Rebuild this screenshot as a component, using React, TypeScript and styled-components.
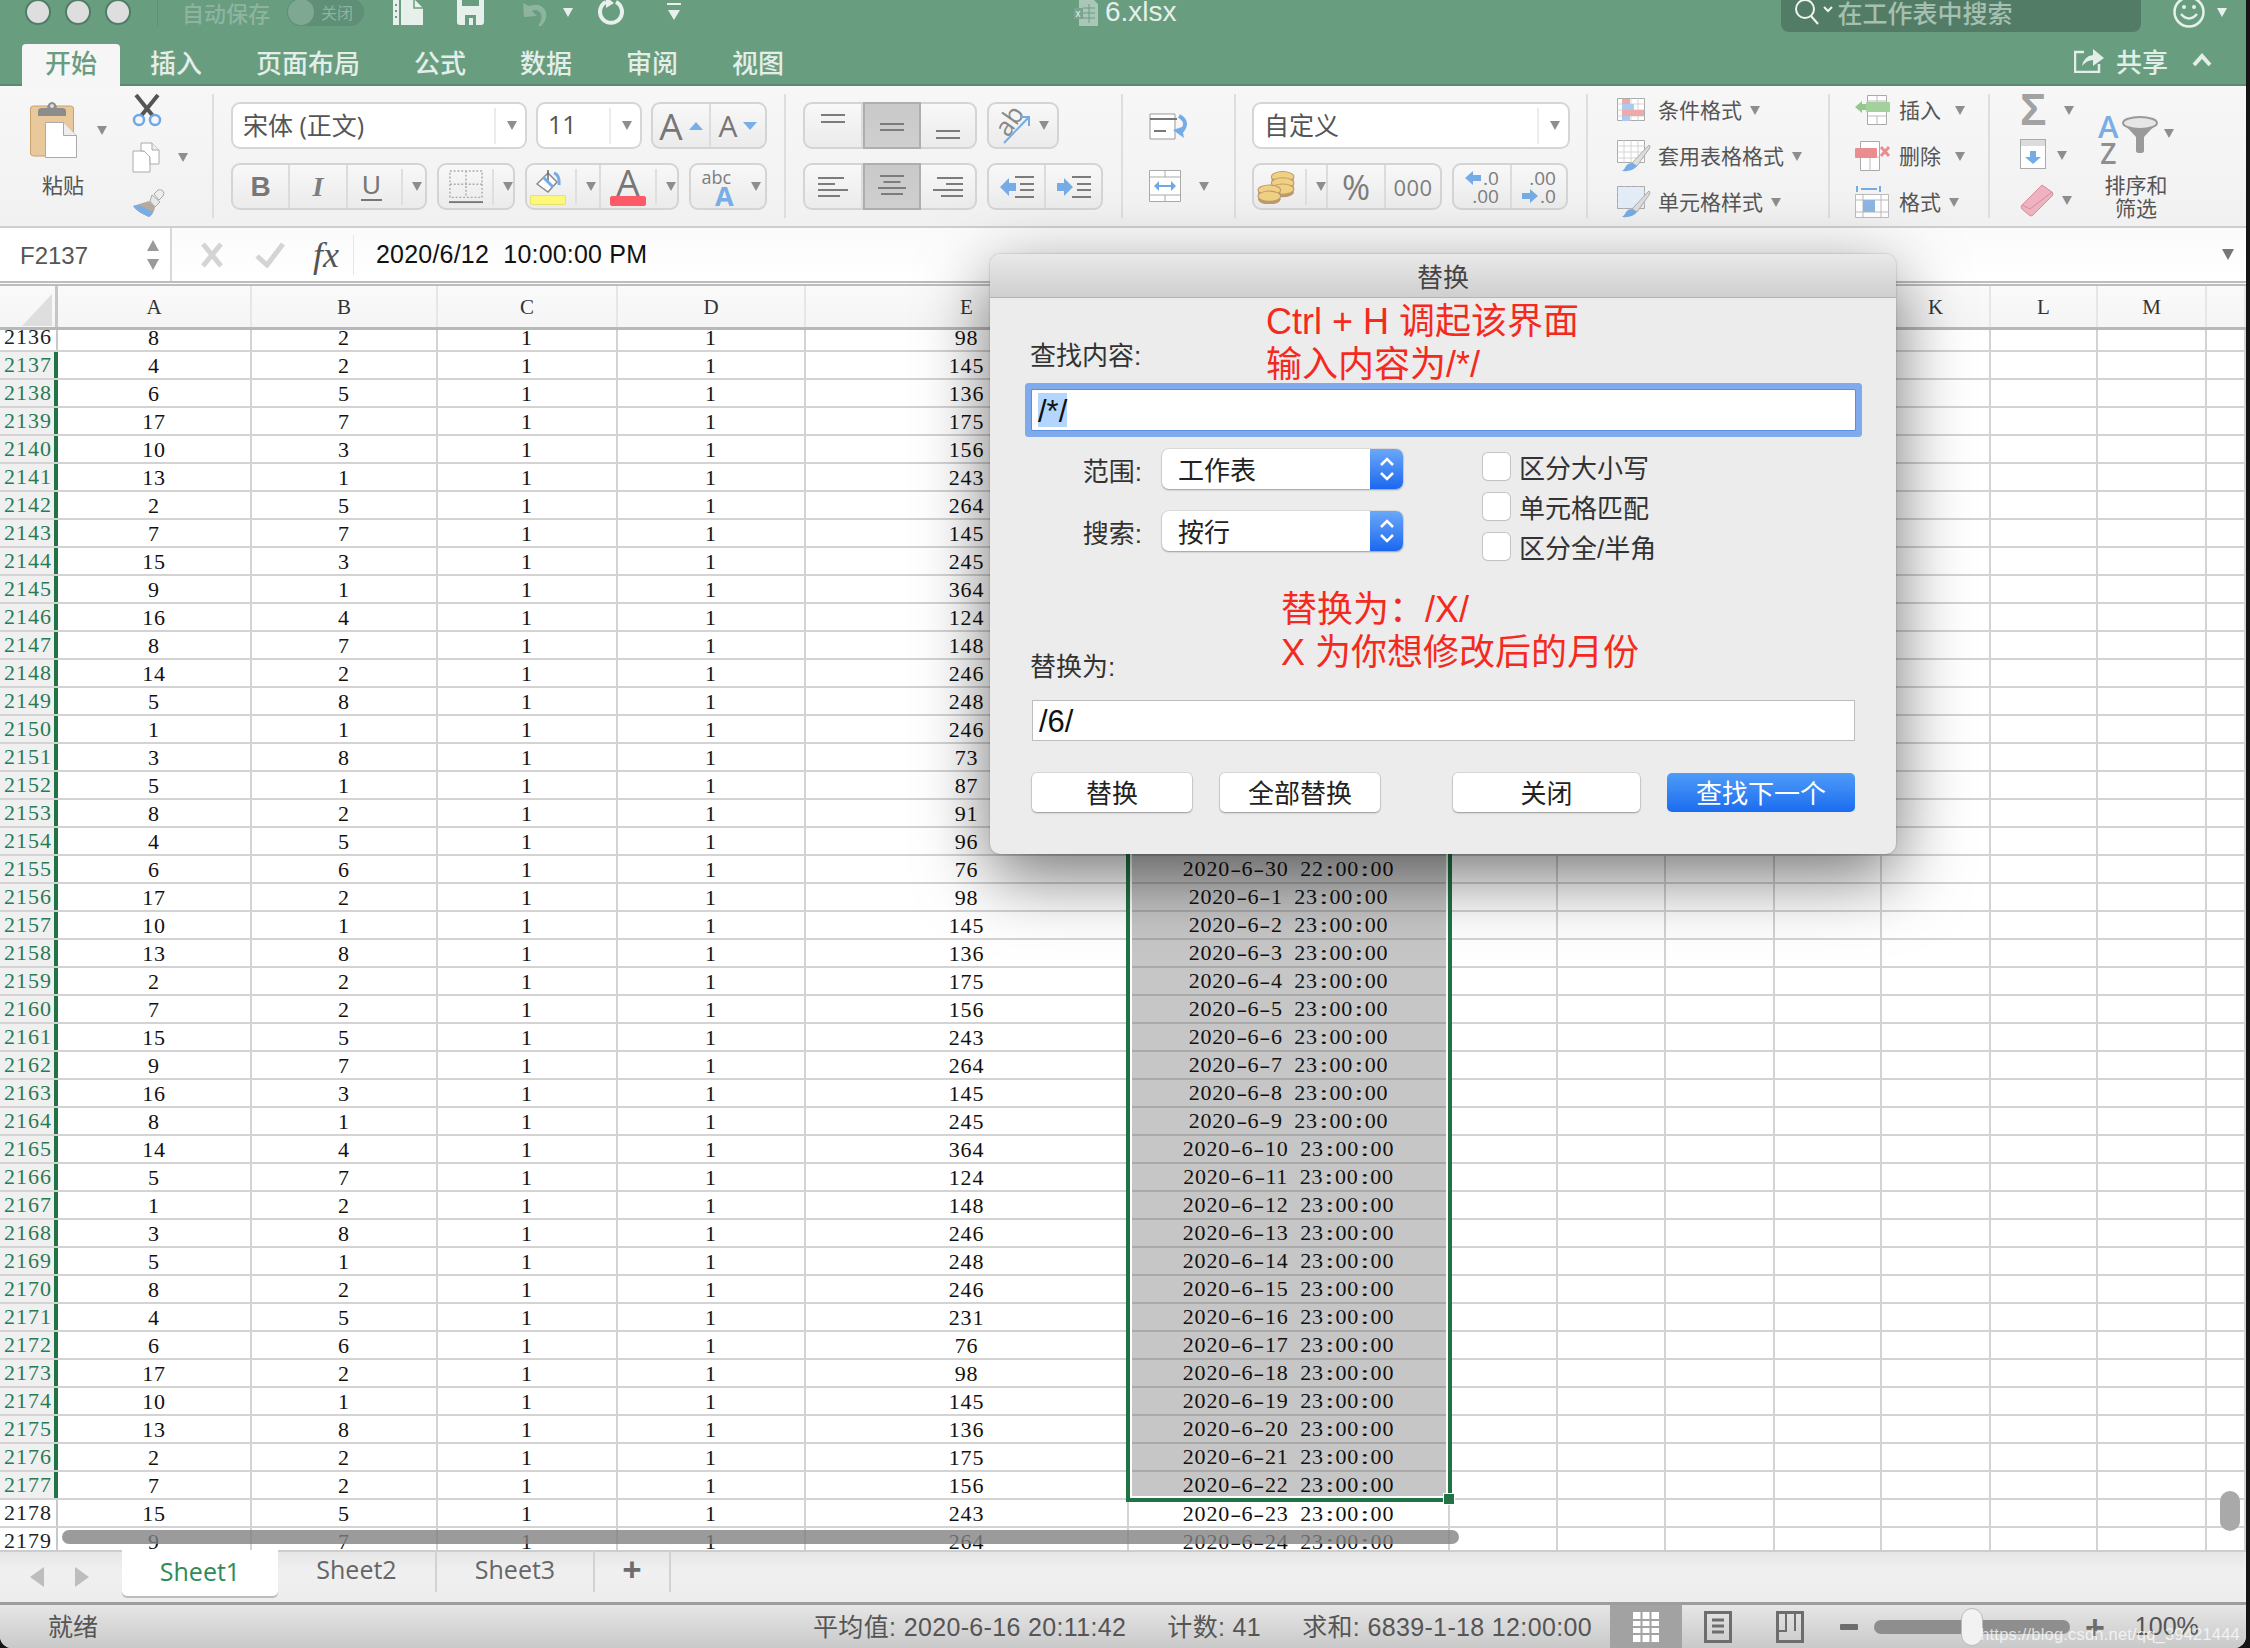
import React from 'react';
import styled, { createGlobalStyle } from 'styled-components';

const SANS = `"Liberation Sans", "Noto Sans CJK SC", sans-serif`;
const OPEN = `"Open Sans", "Noto Sans CJK SC", sans-serif`;
const SERIF = `"Liberation Serif", "Noto Sans CJK SC", serif`;

const Global = createGlobalStyle`
  html, body { margin: 0; padding: 0; width: 2250px; height: 1648px; overflow: hidden; background: #151515; }
  * { box-sizing: border-box; }
`;

const Window = styled.div`
  position: relative; width: 2246px; height: 1648px; overflow: hidden; background: #fff;
  border-radius: 0 0 12px 12px; font-family: ${SANS}; color: #333;
`;

/* ---------- title + tabs ---------- */
const Head = styled.header`height: 86px; background: #689d80; border-bottom: 2px solid #5a8b71;`;
const TopRow = styled.div`display: flex; align-items: center; height: 24px;`;
const Lights = styled.div`display: flex; gap: 14px; padding-left: 25px;`;
const Light = styled.span`width: 26px; height: 26px; border-radius: 50%; background: #dedede; border: 2px solid #4f7d65;`;
const TopSep = styled.span`width: 1px; height: 28px; background: #5e9077; margin-left: 26px;`;
const AutoSave = styled.span`margin-left: 24px; font-size: 22px; font-weight: 500; color: #8eb4a0;`;
const Toggle = styled.span`
  margin-left: 17px; width: 77px; height: 28px; border-radius: 14px; background: #5f8f76;
  display: flex; align-items: center; gap: 7px; color: #8eb4a0; font-size: 16px;
  &::before { content: ''; width: 26px; height: 26px; margin-left: 1px; border-radius: 50%; background: #7fa892; }
`;
const TopIcon = styled.span<{ $ml: number }>`display: flex; margin-left: ${p => p.$ml}px;`;
const TitleText = styled.span`margin-left: 7px; font-size: 28px; color: #e6efe9;`;
const Search = styled.div`
  margin-left: 604px; width: 360px; height: 40px; border-radius: 8px; background: #527c66; flex: none;
  display: flex; align-items: center; padding-left: 12px; color: #a5c0b1; font-size: 25px; font-weight: 500;
`;
const SearchText = styled.span`margin-left: 5px;`;
const TabRow = styled.nav`display: flex; align-items: flex-end; height: 44px; margin-top: 18px; padding-left: 22px; gap: 6px;`;
const Tab = styled.div<{ $active?: boolean }>`
  height: 44px; padding: 0 24px 9px; display: flex; align-items: center; justify-content: center; font-size: 26px; font-weight: 500; white-space: nowrap;
  color: ${p => (p.$active ? '#6a9c81' : '#e4eee8')};
  background: ${p => (p.$active ? '#f6f6f6' : 'transparent')};
  border-radius: 4px 4px 0 0; margin-bottom: -2px;
  width: ${p => (p.$active ? '98px' : 'auto')};
`;
const Share = styled.div`
  margin-left: auto; display: flex; align-items: center; gap: 12px; padding: 0 34px 8px 0; height: 44px; color: #e4eee8;
  font-size: 26px; font-weight: 500;
`;

/* ---------- ribbon ---------- */
const Ribbon = styled.section`
  display: flex; height: 142px; background: linear-gradient(#f7f7f7, #f1f1f1); border-bottom: 2px solid #cfcfcf;
`;
const Group = styled.div<{ $w: number; $pl?: number }>`
  position: relative; flex: none; width: ${p => p.$w}px; padding-left: ${p => p.$pl ?? 0}px;
`;
const Split = styled.span`flex: none; width: 2px; height: 124px; margin-top: 8px; background: #dedede;`;
const Rows = styled.div`display: flex; flex-direction: column; gap: 14px; padding-top: 16px;`;
const Row = styled.div<{ $gap?: number }>`display: flex; gap: ${p => p.$gap ?? 10}px;`;
const Select = styled.div<{ $w: number }>`
  width: ${p => p.$w}px; height: 47px; background: #fff; border: 2px solid #d6d6d6; border-radius: 9px;
  display: flex; align-items: center; padding-left: 10px; font-size: 25px; color: #555; font-family: ${OPEN};
`;
const SelectText = styled.span`flex: 1; margin-top: -3px; white-space: nowrap;`;
const Ends = styled.span`
  width: 2px; height: 36px; background: #ececec; margin-right: 11px;
`;
const EndGap = styled.span`width: 8px; flex: none;`;
const BtnGroup = styled.div<{ $w: number }>`
  width: ${p => p.$w}px; height: 47px; display: flex;
  border: 2px solid #d4d4d4; border-radius: 9px; background: linear-gradient(#f8f8f8, #ebebeb);
`;
const Seg = styled.div<{ $w: number; $active?: boolean; $pl?: number }>`
  flex: none; width: ${p => p.$w}px; height: 100%; position: relative;
  display: flex; align-items: center; gap: 5px; color: #777;
  justify-content: ${p => (p.$pl !== undefined ? 'flex-start' : 'center')};
  padding-left: ${p => p.$pl ?? 0}px;
  border-right: 2px solid #dcdcdc;
  &:last-child { border-right: 0; flex: 1; }
  ${p => p.$active && `
    background: linear-gradient(#c9c9c9, #cfcfcf); border: 2px solid #aeaeae; border-bottom-color: #aeaeae;
    margin: -2px 0; height: 47px;
  `}
`;
const SegBar = styled.span`flex: none; width: 2px; height: 36px; background: #dfdfdf; margin: 0 4px;`;
const Caret = styled.span<{ $ml?: number; $c?: string; $mt?: number }>`
  flex: none; display: inline-block; width: 0; height: 0; margin-left: ${p => p.$ml ?? 0}px; margin-top: ${p => p.$mt ?? 0}px;
  border-left: 5px solid transparent; border-right: 5px solid transparent; border-top: 9px solid ${p => p.$c ?? '#8e8e8e'};
`;
const Bold = styled.span`font-family: ${SANS}; font-weight: 700; font-size: 28px; color: #777;`;
const Ital = styled.span`font-family: ${SERIF}; font-style: italic; font-weight: 700; font-size: 28px; color: #7d7d7d;`;
const Under = styled.span`font-family: ${SANS}; font-size: 26px; color: #777; line-height: 24px; border-bottom: 2px solid #777; padding: 0 1px 2px; margin-right: 10px;`;
const BigA = styled.span<{ $s: number }>`font-family: ${OPEN}; font-size: ${p => p.$s}px; line-height: 1; color: #777; margin-right: 1px;`;
const Tri = styled.span<{ $down?: boolean }>`
  width: 0; height: 0; border-left: 7px solid transparent; border-right: 7px solid transparent;
  ${p => (p.$down ? 'border-top: 8px solid #7aaee6;' : 'border-bottom: 8px solid #7aaee6;')}
`;
const ColorCell = styled.div`display: flex; flex-direction: column; align-items: center; line-height: 1;`;
const Swatch = styled.span<{ $c: string; $b: string }>`
  width: 36px; height: 10px; border-radius: 2px; background: ${p => p.$c}; border: 1px solid ${p => p.$b};
`;
const FontA = styled.span`font-family: ${OPEN}; font-size: 37px; line-height: 28px; color: #777;`;
const AbcWrap = styled.div`display: flex; flex-direction: column; align-items: center; line-height: 1; color: #7d7d7d; font-family: ${OPEN}; font-size: 18px;`;
const AbcA = styled.span`color: #79ade6; font-weight: 700; font-size: 27px; line-height: 20px; margin-left: 16px;`;
const Pct = styled.span`font-family: ${OPEN}; font-size: 34px; color: #7d7d7d;`;
const Thou = styled.span`font-family: ${OPEN}; font-size: 22px; color: #7d7d7d; letter-spacing: .5px;`;
const Dec = styled.div`display: grid; grid-template-columns: auto auto; align-items: center; justify-items: end; column-gap: 2px; font-family: ${OPEN}; font-size: 19px; line-height: 18px; color: #7d7d7d;`;
const DecWide = styled.span`grid-column: 1 / 3;`;
const Stack = styled.div<{ $pt: number; $gap: number; $pl?: number }>`
  display: flex; flex-direction: column; align-items: flex-start; gap: ${p => p.$gap}px; padding-top: ${p => p.$pt}px; padding-left: ${p => p.$pl ?? 0}px;
`;
const IconLine = styled.div`display: flex; align-items: center; height: 32px;`;
const PasteCol = styled.div`position: absolute; left: 30px; top: 14px; display: flex; flex-direction: column;`;
const PasteTop = styled.div`display: flex; align-items: center;`;
const PasteLabel = styled.span`font-size: 21px; color: #555; margin: 9px 0 0 12px;`;
const ClipCol = styled.div`position: absolute; left: 132px; top: 8px; display: flex; flex-direction: column; gap: 15px;`;
const StyleRow = styled.div`display: flex; align-items: center; height: 46px;`;
const StyleIcon = styled.span<{ $w: number }>`display: flex; width: ${p => p.$w}px; flex: none;`;
const StyleText = styled.span`font-size: 21px; color: #555; white-space: nowrap; margin-top: -2px;`;
const SortCol = styled.div`position: absolute; left: 108px; top: 26px; display: flex; flex-direction: column; align-items: center; width: 92px;`;
const SortTop = styled.div`display: flex; align-items: flex-start; width: 92px;`;
const FunnelWrap = styled.span`display: flex; margin: 4px 0 0 3px;`;
const AZ = styled.div`display: flex; flex-direction: column; align-items: center; font-family: ${OPEN}; font-size: 28px; line-height: 26px; font-weight: 600; color: #8f8f8f;`;
const AZA = styled.span`color: #79ade6; font-size: 31px; line-height: 28px;`;
const SortLabel = styled.div`font-size: 21px; color: #555; line-height: 23px; text-align: center; margin-top: 8px; margin-left: -16px; white-space: nowrap;`;
const SumGlyph = styled.span`font-family: ${SANS}; font-weight: 700; font-size: 44px; line-height: 32px; color: #a2a2a2; width: 44px;`;

/* ---------- formula bar ---------- */
const Formula = styled.div`display: flex; align-items: center; height: 58px; background: linear-gradient(#fbfbfb, #fff); border-bottom: 5px double #bdbdbd;`;
const NameBox = styled.div`
  width: 172px; height: 100%; background: #fff; border-right: 2px solid #d8d8d8; display: flex; align-items: center;
  padding-left: 20px; font-size: 24px; color: #555; font-family: ${SANS};
`;
const NameText = styled.span`flex: 1; margin-top: 2px;`;
const Spin = styled.div`display: flex; flex-direction: column; gap: 8px; margin-right: 11px;`;
const SpinUp = styled.span`width: 0; height: 0; border-left: 6px solid transparent; border-right: 6px solid transparent; border-bottom: 11px solid #9a9a9a;`;
const SpinDown = styled(SpinUp)`border-bottom: 0; border-top: 11px solid #9a9a9a;`;
const FxIcons = styled.div`display: flex; align-items: center; width: 188px; height: 100%; padding-left: 28px; gap: 31px;`;
const Fx = styled.span`font-family: ${SERIF}; font-style: italic; font-size: 36px; color: #555; border-right: 1px solid #e6e6e6; padding-right: 14px; line-height: 40px; margin-left: -3px;`;
const FormulaText = styled.span`flex: 1; font-size: 25px; color: #111; white-space: pre; margin-left: 16px; letter-spacing: .2px;`;
const FormulaDrop = styled(Caret)`margin-right: 12px; border-left-width: 6px; border-right-width: 6px; border-top-width: 11px; border-top-color: #777;`;

/* ---------- sheet ---------- */
const COLS = [
  ['A', 194], ['B', 186], ['C', 180], ['D', 188], ['E', 323], ['F', 321], ['G', 108], ['H', 108],
  ['I', 109], ['J', 107], ['K', 109], ['L', 107], ['M', 109], ['', 39],
] as const;

const ColHead = styled.div`display: flex; height: 44px; background: linear-gradient(#fafafa, #f5f5f5); border-bottom: 3px solid #b8b8b8;`;
const Corner = styled.div`
  position: relative; width: 58px; border-right: 3px solid #c6c6c6;
  &::after { content: ''; position: absolute; left: 22px; top: 8px; width: 30px; height: 32px; background: #dedede; clip-path: polygon(100% 0, 100% 100%, 0 100%); }
`;
const ColLabel = styled.div<{ $w: number }>`
  width: ${p => p.$w}px; flex: none; display: flex; align-items: center; justify-content: center; padding-top: 2px;
  border-right: 2px solid #e6e6e6; font-family: ${SERIF}; font-size: 21px; color: #333;
`;
const Sheet = styled.div`position: relative; height: 1220px; overflow: hidden; background: #fff;`;
const Scrolled = styled.div`margin-top: -6px;`;
const GridRow = styled.div`display: flex; height: 28px; border-bottom: 2px solid #d3d3d3;`;
const RowNo = styled.div<{ $sel: boolean }>`
  width: 58px; flex: none; padding-left: 4px; display: flex; align-items: center; font-family: ${SERIF}; font-size: 22px; letter-spacing: 1px;
  color: ${p => (p.$sel ? '#2b7a50' : '#222')};
  background: ${p => (p.$sel ? '#f0f0f0' : '#fff')};
  border-right: ${p => (p.$sel ? '4px solid #217346' : '2px solid #c8c8c8')};
`;
const Cell = styled.div<{ $w: number; $sel?: boolean }>`
  width: ${p => p.$w}px; flex: none; height: 28px; display: flex; align-items: center; justify-content: center;
  font-family: ${SERIF}; font-size: 22px; letter-spacing: .8px; color: #111; white-space: pre;
  border-right: 2px solid #d3d3d3;
  ${p => p.$sel && `background: #c6c6c6; border-bottom: 2px solid #a9a9a9; border-right-color: transparent;`}
`;
const Sep = styled.span`display: inline-block; width: 11.6px; text-align: center; white-space: pre; letter-spacing: 0; transform: scaleX(1.5);`;
const SelBox = styled.div`
  position: absolute; left: 1126px; top: 20px; width: 326px; height: 1152px; border: 4px solid #217346; pointer-events: none;
  box-shadow: inset 0 0 0 2px #fff;
`;
const Handle = styled.span`position: absolute; right: -7px; bottom: -7px; width: 12px; height: 12px; background: #217346; border: 1px solid #fff;`;
const HScroll = styled.div`position: absolute; left: 62px; top: 1200px; width: 1397px; height: 14px; border-radius: 7px; background: rgba(130,130,130,.8);`;
const VScroll = styled.div`position: absolute; left: 2220px; top: 1161px; width: 20px; height: 40px; border-radius: 10px; background: #a9a9a9;`;

/* ---------- bottom bars ---------- */
const SheetBar = styled.div`display: flex; height: 52px; background: linear-gradient(#e6e6e6, #f0f0f0 40%, #ededed); border-top: 2px solid #cdcdcd;`;
const SheetNav = styled.div`display: flex; gap: 31px; width: 122px; padding: 15px 0 0 30px;`;
const NavL = styled.span`width: 0; height: 0; border-top: 10px solid transparent; border-bottom: 10px solid transparent; border-right: 14px solid #bdbdbd;`;
const NavR = styled(NavL)`border-right: 0; border-left: 14px solid #bdbdbd;`;
const SheetTab = styled.div<{ $w: number; $active?: boolean }>`
  width: ${p => p.$w}px; height: ${p => (p.$active ? '46px' : '42px')}; margin-top: -2px; display: flex; align-items: center; justify-content: center;
  font-family: ${OPEN}; font-size: 25px; padding-bottom: 5px;
  color: ${p => (p.$active ? '#2e8b57' : '#666')};
  ${p => (p.$active
    ? 'background: #fff; border-radius: 0 0 5px 5px; box-shadow: 0 2px 0 #bdbdbd;'
    : 'border-right: 2px solid #d2d2d2;')}
`;
const Status = styled.div`
  position: relative; display: flex; align-items: center; height: 46px; padding-bottom: 4px; background: linear-gradient(#e6e6e6, #c9c9c9); border-top: 3px solid #9d9d9d;
  font-size: 25px; color: #555;
`;
const Ready = styled.span`margin-left: 48px; width: 50px;`;
const Stats = styled.div`display: flex; margin-left: 715px; gap: 41px; white-space: nowrap; letter-spacing: .35px;`;
const StatusRight = styled.div`position: absolute; left: 1610px; top: 0; right: 0; height: 100%; display: flex; align-items: center;`;
const ViewBtn = styled.div<{ $active?: boolean }>`
  width: 72px; height: 100%; display: flex; align-items: center; justify-content: center;
  background: ${p => (p.$active ? '#a2a2a2' : 'transparent')};
`;
const Minus = styled.span`width: 18px; height: 6px; background: #6d6d6d; margin-left: 14px; border-radius: 1px;`;
const Track = styled.div`
  position: relative; width: 196px; height: 14px; margin-left: 16px; background: #8e8e8e; border-radius: 7px;
`;
const Knob = styled.span`position: absolute; left: 87px; top: -12px; width: 22px; height: 38px; border-radius: 11px; background: #f2f2f2; border: 1px solid #bbb;`;
const Plus = styled.span<{ $ml?: number }>`font-size: 34px; font-weight: 700; color: #6d6d6d; margin-left: ${p => p.$ml ?? 0}px; line-height: 1;`;
const Zoom = styled.span`margin-left: 30px; color: #555;`;
const Watermark = styled.span`
  position: absolute; right: 6px; bottom: 4px; font-size: 16.5px; color: rgba(255,255,255,.72); white-space: nowrap; letter-spacing: .2px;
`;

/* ---------- dialog ---------- */
const Dialog = styled.div`
  position: absolute; left: 990px; top: 254px; width: 906px; height: 600px; border-radius: 10px; background: #ececec;
  box-shadow: 0 22px 70px rgba(0,0,0,.55), 0 0 2px rgba(0,0,0,.3); overflow: hidden; font-size: 26px; color: #333;
`;
const DlgTitle = styled.div`
  height: 44px; background: linear-gradient(#e9e9e9, #cfcfcf); border-bottom: 1px solid #b4b4b4;
  display: flex; align-items: center; justify-content: center; font-size: 26px; color: #444;
`;
const DlgBody = styled.div`padding: 0 41px 0 42px;`;
const FieldLabel = styled.div<{ $mt: number }>`line-height: 30px; margin-top: ${p => p.$mt}px; margin-left: -2px;`;
const FocusInput = styled.div`
  height: 40px; margin-top: 19px; background: #fff; box-shadow: 0 0 0 1px #5d8fdc, 0 0 0 7px #7fabec; border-radius: 1px;
  display: flex; align-items: center; padding-left: 6px; font-size: 31px; color: #111;
`;
const Sel = styled.span`background: #b4d5fe; line-height: 38px; height: 34px;`;
const PlainInput = styled.div`
  height: 41px; margin-top: 18px; background: #fff; border: 1px solid #bdbdbd;
  display: flex; align-items: center; padding: 2px 0 0 6px; font-size: 31px; color: #111;
`;
const Options = styled.div`display: flex; margin-top: 19px; height: 111px;`;
const OptLeft = styled.div`display: flex; flex-direction: column; gap: 22px;`;
const OptLine = styled.div`display: flex; align-items: center; height: 40px;`;
const OptLabel = styled.span`width: 111px; text-align: right; margin-left: -1px;`;
const PopUp = styled.div`
  width: 241px; height: 40px; margin-left: 20px; background: #fff; border-radius: 7px; position: relative; overflow: hidden;
  box-shadow: 0 1px 2px rgba(0,0,0,.3), 0 0 0 1px rgba(0,0,0,.06); display: flex; align-items: center; padding: 0 0 2px 16px; color: #222;
`;
const PopEnd = styled.span`
  position: absolute; right: 0; top: 0; bottom: 0; width: 33px; background: linear-gradient(#6ba8f8, #1b68f0);
  display: flex; align-items: center; justify-content: center;
`;
const OptRight = styled.div`display: flex; flex-direction: column; gap: 12px; margin: 3px 0 0 80px;`;
const CheckLine = styled.div`display: flex; align-items: center; height: 28px; gap: 9px;`;
const Box = styled.span`width: 27px; height: 27px; border-radius: 5px; background: #fff; box-shadow: 0 0 0 1px #c4c4c4, 0 1px 1px rgba(0,0,0,.15);`;
const Buttons = styled.div`display: flex; margin-top: 32px;`;
const Btn = styled.div<{ $w: number; $ml?: number; $primary?: boolean }>`
  width: ${p => p.$w}px; height: 39px; margin-left: ${p => p.$ml ?? 0}px; border-radius: 5px; display: flex; align-items: center; justify-content: center; padding-bottom: 2px;
  background: ${p => (p.$primary ? 'linear-gradient(#4f9cf8, #1b6cf0)' : '#fff')};
  color: ${p => (p.$primary ? '#fff' : '#222')};
  box-shadow: ${p => (p.$primary ? 'none' : '0 1px 2px rgba(0,0,0,.3), 0 0 0 1px rgba(0,0,0,.08)')};
`;
const Note = styled.div<{ $l: number; $t: number }>`
  position: absolute; left: ${p => p.$l}px; top: ${p => p.$t}px; font-size: 36px; line-height: 42.5px; color: #f52a1e; white-space: pre;
`;

/* ---------- icons ---------- */
const Paste = () => (
  <svg width="48" height="60" viewBox="0 0 48 60">
    <rect x=".5" y="6" width="43" height="50" rx="3" fill="#e9c99b" stroke="#c9a06e" />
    <path d="M8 16v-5q0-3 4-3h5q1-6 5-6t5 6h5q4 0 4 3v5z" fill="#8c8c8c" />
    <circle cx="22" cy="6" r="2" fill="#ddd" />
    <path d="M15.500 22.500h18l13 13v22h-31z" fill="#fff" stroke="#aaa" />
    <path d="M33.500 22.500v13h13" fill="#eee" stroke="#aaa" />
  </svg>
);
const Scissors = () => (
  <svg width="30" height="33" viewBox="0 0 30 33">
    <path d="M4 1l17 21M26 1L9 22" stroke="#555" strokeWidth="4" />
    <circle cx="7" cy="26" r="5" fill="none" stroke="#6fa8e6" strokeWidth="2.500" />
    <circle cx="23" cy="26" r="5" fill="none" stroke="#6fa8e6" strokeWidth="2.500" />
  </svg>
);
const CopyIcon = () => (
  <svg width="28" height="31" viewBox="0 0 28 31">
    <path d="M1 9h11l6 6v15H1z" fill="#fff" stroke="#aaa" />
    <path d="M9 1h11l7 7v14H18v-7l-6-6H9z" fill="#fff" stroke="#aaa" />
    <path d="M20 1v7h7" fill="#eee" stroke="#aaa" />
  </svg>
);
const Brush = () => (
  <svg width="34" height="30" viewBox="0 0 34 30">
    <path d="M22 6l4-4q3-1 5 1t0 5l-4 4z" fill="#eee" stroke="#aaa" />
    <path d="M20 7l8 7-5 5L18 13z" fill="#e8e8e8" stroke="#aaa" />
    <path d="M17 13L1 18q4 6 16 11 5-3 6-10z" fill="#b5aa9c" />
    <path d="M1 18q4 6 16 11 3-2 4-5L7 17z" fill="#77ace6" />
  </svg>
);
const Lines = ({ w, y, h = 44, align }: { w: number[]; y: number[]; h?: number; align: 'l' | 'c' | 'r' }) => (
  <svg width="32" height={h} viewBox={`0 0 32 ${h}`}>
    {w.map((lw, i) => (
      <rect key={i} x={align === 'l' ? 1 : align === 'c' ? (32 - lw) / 2 : 31 - lw} y={y[i]} width={lw} height="2" fill="#7c7c7c" />
    ))}
  </svg>
);
const Rotate = () => (
  <svg width="36" height="38" viewBox="0 0 36 38">
    <text x="0" y="24" fontFamily="Open Sans" fontSize="26" fill="#888" transform="rotate(-55 12 18)">ab</text>
    <path d="M6 36L30 11M22 10h9v9" fill="none" stroke="#76ace6" strokeWidth="2" />
  </svg>
);
const Indent = ({ flip }: { flip?: boolean }) => (
  <svg width="34" height="22" viewBox="0 0 34 22">
    {flip ? <path d="M0 7h7V2l9 9-9 9v-5H0z" fill="#76ace6" /> : <path d="M0 11l9-9v5h7v8H9v5z" fill="#76ace6" />}
    <path d="M15 1h19M20 8h14M20 14h14M15 21h19" stroke="#7c7c7c" strokeWidth="2" />
  </svg>
);
const FillBucket = () => (
  <svg width="28" height="26" viewBox="0 0 26 26">
    <path d="M2 15L13 4l9 9-9 10z" fill="#fff" stroke="#888" strokeWidth="1.500" />
    <path d="M13 1v11" stroke="#666" strokeWidth="1.500" />
    <path d="M8 8l10 10" stroke="#76ace6" strokeWidth="3" />
    <path d="M19 4q6 2 5 12" fill="none" stroke="#76ace6" strokeWidth="3" />
  </svg>
);
const Borders = () => (
  <svg width="34" height="36" viewBox="0 0 36 36">
    <path d="M1 1h34v28H1zM18 1v28M1 15h34" fill="none" stroke="#aaa" strokeWidth="1.500" strokeDasharray="2 2" />
    <rect x="0" y="33" width="36" height="2" fill="#777" />
  </svg>
);
const Wrap = () => (
  <svg width="40" height="28" viewBox="0 0 40 28">
    <path d="M1 1h25v25H1z" fill="#fff" stroke="#999" />
    <path d="M1 6h27M5 18h12" stroke="#777" strokeWidth="2" />
    <path d="M30 3q11 6 2 16" fill="none" stroke="#76ace6" strokeWidth="4" />
    <path d="M24 17l11 8-2-11z" fill="#76ace6" />
  </svg>
);
const Merge = () => (
  <svg width="33" height="32" viewBox="0 0 33 32">
    <path d="M.5.5h31v31H.5zM.5 7h31M.5 25h31M16 .5V7M16 25v6" fill="#fff" stroke="#aaa" />
    <path d="M7 16h18" stroke="#6fa8e6" strokeWidth="2" />
    <path d="M5 16l5-5v10zM27 16l-5-5v10z" fill="#6fa8e6" />
  </svg>
);
const Coins = () => (
  <svg width="40" height="34" viewBox="0 0 38 32">
    {[[25, 6], [25, 12], [25, 18]].map(([x, y], i) => (
      <g key={i}><ellipse cx={x} cy={y + 3} rx="11" ry="5" fill="#bd9a6f" /><ellipse cx={x} cy={y} rx="11" ry="5" fill="#f0d082" stroke="#bd9a6f" /></g>
    ))}
    {[[12, 19], [12, 25]].map(([x, y], i) => (
      <g key={i}><ellipse cx={x} cy={y + 3} rx="11" ry="5" fill="#bd9a6f" /><ellipse cx={x} cy={y} rx="11" ry="5" fill="#f0d082" stroke="#bd9a6f" /></g>
    ))}
  </svg>
);
const ArrowL = () => <svg width="16" height="14" viewBox="0 0 16 14"><path d="M0 7l8-7v4h8v6H8v4z" fill="#76ace6" /></svg>;
const ArrowR = () => <svg width="16" height="14" viewBox="0 0 16 14"><path d="M16 7L8 0v4H0v6h8v4z" fill="#76ace6" /></svg>;
const TableGrid = ({ fill }: { fill?: boolean }) => (
  <>
    <path d="M.5.5h27v22H.5z" fill={fill ? '#e3edf8' : '#fff'} stroke="#aaa" />
    <path d="M7 .5v22M14 .5v22M21 .5v22M.5 6h27M.5 12h27M.5 18h27" stroke={fill ? '#e3edf8' : '#d5d5d5'} />
  </>
);
const CondFormat = () => (
  <svg width="28" height="24" viewBox="0 0 28 24">
    <TableGrid />
    <rect x="5" y="1" width="8" height="5" fill="#eaa" /><rect x="5" y="6" width="12" height="6" fill="#a8cbef" />
    <rect x="5" y="12" width="22" height="6" fill="#eea9aa" /><rect x="5" y="18" width="8" height="5" fill="#a8cbef" />
  </svg>
);
const TableBrush = ({ fill }: { fill?: boolean }) => (
  <svg width="34" height="32" viewBox="0 0 34 32">
    <TableGrid fill={fill} />
    <path d="M32 5q2 1 0 4L20 26l-5-3z" fill="#ddd" stroke="#aaa" />
    <path d="M15 23l5 3q-4 6-15 5 3-2 4-5 2-3 6-3z" fill="#76ace6" />
  </svg>
);
const InsertIcon = () => (
  <svg width="36" height="30" viewBox="0 0 36 30">
    <path d="M12.500.5h19v29h-19z" fill="#fff" stroke="#aaa" />
    <path d="M12.500 6h19M12.500 21h19M22 .5v6M22 21v8" stroke="#bbb" />
    <rect x="11" y="7" width="24" height="10" rx="1" fill="#a3d09d" />
    <path d="M0 12l7-6v12z" fill="#93ca8c" /><rect x="6" y="9" width="5" height="6" fill="#93ca8c" />
  </svg>
);
const DeleteIcon = () => (
  <svg width="36" height="30" viewBox="0 0 36 30">
    <path d="M5.500.5h19v29h-19z" fill="#fff" stroke="#aaa" />
    <path d="M5.500 16h19M15 16v14" stroke="#bbb" />
    <rect x="0" y="7" width="22" height="10" rx="1" fill="#ea8d8f" />
    <path d="M26 6l8 9M34 6l-8 9" stroke="#ea8d8f" strokeWidth="3" />
  </svg>
);
const FormatIcon = () => (
  <svg width="34" height="34" viewBox="0 0 34 34">
    <path d="M2 1v6M25 1v6" stroke="#76ace6" strokeWidth="2" />
    <path d="M6 4h16" stroke="#76ace6" strokeWidth="2" />
    <path d="M.5 9.500h33v23H.5zM8 9.500v23M26 9.500v23M.5 15h33M.5 27h33" fill="#fff" stroke="#bbb" />
    <rect x="8" y="15" width="12" height="12" fill="#8fb6e2" />
  </svg>
);
const FillDown = () => (
  <svg width="26" height="32" viewBox="0 0 26 32">
    <rect x=".5" y=".5" width="25" height="29" fill="#fff" stroke="#aaa" />
    <rect x="1" y="1" width="24" height="6" fill="#dcdcdc" />
    <path d="M5 18h5v-6h6v6h5l-8 7z" fill="#76ace6" />
  </svg>
);
const Eraser = () => (
  <svg width="34" height="33" viewBox="0 0 34 33">
    <path d="M22 1l10 7q2 2 0 4L13 31q-2 2-4 0L2 25q-2-2 0-4z" fill="#eeb3c0" stroke="#d58c9c" />
    <path d="M2 21l8 4 22-17" fill="none" stroke="#d58c9c" />
  </svg>
);
const Funnel = () => (
  <svg width="36" height="38" viewBox="0 0 36 38">
    <path d="M1 7l13 14v14q0 2 4 2t4-2V21L35 7z" fill="#9a9a9a" />
    <ellipse cx="18" cy="7" rx="17" ry="6" fill="#e6e6e6" stroke="#9a9a9a" strokeWidth="2" />
  </svg>
);
const DocIcon = () => (
  <svg width="32" height="28" viewBox="0 0 32 28">
    <path d="M1 1h6v26H1zM9 1h13l9 9v17H9z" fill="#e8f0eb" />
    <path d="M22 1v9h9" fill="none" stroke="#689d80" strokeWidth="1.500" />
    <path d="M4 6v2M4 12v2M4 18v2" stroke="#689d80" strokeWidth="2" />
  </svg>
);
const SaveIcon = () => (
  <svg width="27" height="28" viewBox="0 0 27 28">
    <path d="M2 0h23q2 0 2 2v22q0 3-3 3H3q-3 0-3-3V2q0-2 2-2z" fill="#e8f0eb" />
    <rect x="5" y="0" width="17" height="8" fill="#689d80" />
    <rect x="8" y="17" width="11" height="10" fill="#689d80" />
    <rect x="12" y="20" width="4" height="7" fill="#e8f0eb" />
  </svg>
);
const Undo = () => (
  <svg width="30" height="28" viewBox="0 0 30 28">
    <path d="M5 5l1 14 13-1-5-5q6-3 9 3 2 5-3 12h3q8-8 4-16-5-8-16-4z" fill="#8eb4a0" />
  </svg>
);
const Redo = () => (
  <svg width="26" height="30" viewBox="0 0 26 30">
    <path d="M8 5a11 11 0 1 0 10 0" fill="none" stroke="#e8f0eb" strokeWidth="4" />
    <path d="M8 0v11l8-5z" fill="#e8f0eb" />
  </svg>
);
const QuickDrop = () => (
  <svg width="16" height="20" viewBox="0 0 16 20"><path d="M1 1h14v2H1zM2 8h12l-6 10z" fill="#e8f0eb" /></svg>
);
const XlsIcon = () => (
  <svg width="24" height="28" viewBox="0 0 24 28">
    <path d="M5 0h13l6 6v22H5z" fill="#a9c6b6" />
    <path d="M9 10h12M9 15h12M9 20h12M15 6v19" stroke="#689d80" />
    <rect x="0" y="10" width="9" height="11" fill="#7ba48e" />
    <text x="1.500" y="19" fontSize="10" fontFamily="Liberation Sans" fill="#e8f0eb">x</text>
  </svg>
);
const SearchGlyph = () => (
  <svg width="40" height="28" viewBox="0 0 40 28">
    <circle cx="12" cy="11" r="9" fill="none" stroke="#f0f5f2" strokeWidth="2" />
    <path d="M18 18l7 8" stroke="#f0f5f2" strokeWidth="2" />
    <path d="M31 9l4 4 4-4" fill="none" stroke="#f0f5f2" strokeWidth="2" />
  </svg>
);
const Smiley = () => (
  <svg width="32" height="32" viewBox="0 0 32 32">
    <circle cx="16" cy="16" r="14.500" fill="none" stroke="#e8f0eb" strokeWidth="2.500" />
    <circle cx="11" cy="11" r="2" fill="#e8f0eb" /><circle cx="21" cy="11" r="2" fill="#e8f0eb" />
    <path d="M8 18q8 9 16 0" fill="none" stroke="#e8f0eb" strokeWidth="2.500" />
  </svg>
);
const ShareIcon = () => (
  <svg width="30" height="26" viewBox="0 0 30 26">
    <path d="M10 5H1v20h24v-8" fill="none" stroke="#e4eee8" strokeWidth="2.500" />
    <path d="M8 19q2-10 11-11V2l11 9-11 8v-6q-6 0-11 6z" fill="#e4eee8" />
  </svg>
);
const ChevUp = () => (
  <svg width="20" height="14" viewBox="0 0 20 14"><path d="M2 12l8-9 8 9" fill="none" stroke="#e4eee8" strokeWidth="4" /></svg>
);
const Cross = () => <svg width="24" height="26" viewBox="0 0 24 26"><path d="M3 2l18 22M21 2L3 24" stroke="#d4d4d4" strokeWidth="5" /></svg>;
const Check = () => <svg width="30" height="26" viewBox="0 0 30 26"><path d="M2 14l10 9L28 2" fill="none" stroke="#d4d4d4" strokeWidth="5" /></svg>;
const Chevrons = () => (
  <svg width="16" height="26" viewBox="0 0 16 26"><path d="M2 9l6-6 6 6M2 17l6 6 6-6" fill="none" stroke="#fff" strokeWidth="2.500" /></svg>
);
const ViewGrid = () => (
  <svg width="26" height="30" viewBox="0 0 26 30">
    <rect width="26" height="30" fill="#fff" />
    <path d="M8.500 0v30M17.500 0v30M0 8h26M0 15h26M0 22h26" stroke="#a2a2a2" strokeWidth="2" />
  </svg>
);
const ViewPage = () => (
  <svg width="28" height="32" viewBox="0 0 28 32">
    <rect x="1.500" y="1.500" width="25" height="29" fill="none" stroke="#6d6d6d" strokeWidth="3" />
    <path d="M8 9h12M8 15h12M8 21h12" stroke="#6d6d6d" strokeWidth="3" />
  </svg>
);
const ViewBreak = () => (
  <svg width="28" height="32" viewBox="0 0 28 32">
    <rect x="1.500" y="1.500" width="25" height="29" fill="none" stroke="#6d6d6d" strokeWidth="3" />
    <path d="M10 0v20H0M19 0v20" fill="none" stroke="#6d6d6d" strokeWidth="2" />
  </svg>
);

/* ---------- data ---------- */
const DATA: [number, number, number][] = [
  [8,2,98],[4,2,145],[6,5,136],[17,7,175],[10,3,156],[13,1,243],[2,5,264],[7,7,145],[15,3,245],[9,1,364],
  [16,4,124],[8,7,148],[14,2,246],[5,8,248],[1,1,246],[3,8,73],[5,1,87],[8,2,91],[4,5,96],[6,6,76],
  [17,2,98],[10,1,145],[13,8,136],[2,2,175],[7,2,156],[15,5,243],[9,7,264],[16,3,145],[8,1,245],[14,4,364],
  [5,7,124],[1,2,148],[3,8,246],[5,1,248],[8,2,246],[4,5,231],[6,6,76],[17,2,98],[10,1,145],[13,8,136],
  [2,2,175],[7,2,156],[15,5,243],[9,7,264],
];

const dateFor = (row: number) => {
  if (row === 2155) return '2020-6-30 22:00:00';
  if (row >= 2156) return `2020-6-${row - 2155} 23:00:00`;
  return '';
};
const DateText = ({ value }: { value: string }) => (
  <>
    {value.split(/([- :])/).map((part, i) => (i % 2 ? <Sep key={i}>{part}</Sep> : part))}
  </>
);

export default function App() {
  return (
    <Window>
      <Global />
      <Head>
        <TopRow>
          <Lights><Light /><Light /><Light /></Lights>
          <TopSep />
          <AutoSave>自动保存</AutoSave>
          <Toggle>关闭</Toggle>
          <TopIcon $ml={28}><DocIcon /></TopIcon>
          <TopIcon $ml={33}><SaveIcon /></TopIcon>
          <TopIcon $ml={34}><Undo /></TopIcon>
          <Caret $ml={15} $c="#e8f0eb" />
          <TopIcon $ml={25}><Redo /></TopIcon>
          <TopIcon $ml={42}><QuickDrop /></TopIcon>
          <TopIcon $ml={392}><XlsIcon /></TopIcon>
          <TitleText>6.xlsx</TitleText>
          <Search><SearchGlyph /><SearchText>在工作表中搜索</SearchText></Search>
          <TopIcon $ml={32}><Smiley /></TopIcon>
          <Caret $ml={12} $c="#e8f0eb" />
        </TopRow>
        <TabRow>
          <Tab $active>开始</Tab>
          <Tab>插入</Tab>
          <Tab>页面布局</Tab>
          <Tab>公式</Tab>
          <Tab>数据</Tab>
          <Tab>审阅</Tab>
          <Tab>视图</Tab>
          <Share><ShareIcon /><span>共享</span><TopIcon $ml={12}><ChevUp /></TopIcon></Share>
        </TabRow>
      </Head>

      <Ribbon>
        <Group $w={212}>
          <PasteCol>
            <PasteTop><Paste /><Caret $ml={19} /></PasteTop>
            <PasteLabel>粘贴</PasteLabel>
          </PasteCol>
          <ClipCol>
            <Scissors />
            <PasteTop><CopyIcon /><Caret $ml={18} /></PasteTop>
            <Brush />
          </ClipCol>
        </Group>
        <Split />
        <Group $w={570} $pl={17}>
          <Rows>
            <Row $gap={9}>
              <Select $w={296}><SelectText>宋体 (正文)</SelectText><Ends /><Caret /><EndGap /></Select>
              <Select $w={106}><SelectText>11</SelectText><Ends /><Caret /><EndGap /></Select>
              <BtnGroup $w={116}>
                <Seg $w={58}><BigA $s={37}>A</BigA><Tri /></Seg>
                <Seg $w={58}><BigA $s={30}>A</BigA><Tri $down /></Seg>
              </BtnGroup>
            </Row>
            <Row>
              <BtnGroup $w={196}>
                <Seg $w={57}><Bold>B</Bold></Seg>
                <Seg $w={58}><Ital>I</Ital></Seg>
                <Seg $w={77} $pl={13}><Under>U</Under><SegBar /><Caret /></Seg>
              </BtnGroup>
              <BtnGroup $w={78}>
                <Seg $w={74} $pl={10}><Borders /><SegBar /><Caret /></Seg>
              </BtnGroup>
              <BtnGroup $w={154}>
                <Seg $w={74} $pl={3}><ColorCell><FillBucket /><Swatch $c="#fdf87a" $b="#e6e26c" /></ColorCell><SegBar /><Caret /></Seg>
                <Seg $w={76} $pl={9}><ColorCell><FontA>A</FontA><Swatch $c="#fb5a66" $b="#fb5a66" /></ColorCell><SegBar /><Caret /></Seg>
              </BtnGroup>
              <BtnGroup $w={78}>
                <Seg $w={74} $pl={8}><AbcWrap>abc<AbcA>A</AbcA></AbcWrap><Caret $ml={12} /></Seg>
              </BtnGroup>
            </Row>
          </Rows>
        </Group>
        <Split />
        <Group $w={335} $pl={17}>
          <Rows>
            <Row>
              <BtnGroup $w={174}>
                <Seg $w={58}><Lines align="c" w={[24, 24]} y={[10, 17]} /></Seg>
                <Seg $w={58} $active><Lines align="c" w={[24, 24]} y={[19, 25]} /></Seg>
                <Seg $w={58}><Lines align="c" w={[24, 24]} y={[26, 33]} /></Seg>
              </BtnGroup>
              <BtnGroup $w={72}>
                <Seg $w={68}><Rotate /><Caret /></Seg>
              </BtnGroup>
            </Row>
            <Row>
              <BtnGroup $w={174}>
                <Seg $w={58}><Lines align="l" w={[26, 17, 30, 22]} y={[12, 18, 24, 30]} /></Seg>
                <Seg $w={58} $active><Lines align="c" w={[24, 17, 28, 22]} y={[10, 16, 22, 28]} /></Seg>
                <Seg $w={58}><Lines align="r" w={[26, 17, 30, 22]} y={[12, 18, 24, 30]} /></Seg>
              </BtnGroup>
              <BtnGroup $w={116}>
                <Seg $w={57}><Indent /></Seg>
                <Seg $w={57}><Indent flip /></Seg>
              </BtnGroup>
            </Row>
          </Rows>
        </Group>
        <Split />
        <Group $w={111} $pl={26}>
          <Stack $pt={27} $gap={29}>
            <Wrap />
            <PasteTop><Merge /><Caret $ml={17} /></PasteTop>
          </Stack>
        </Group>
        <Split />
        <Group $w={350} $pl={16}>
          <Rows>
            <Row>
              <Select $w={318}><SelectText>自定义</SelectText><Ends /><Caret /><EndGap /></Select>
            </Row>
            <Row>
              <BtnGroup $w={190}>
                <Seg $w={74} $pl={3}><Coins /><SegBar /><Caret /></Seg>
                <Seg $w={58}><Pct>%</Pct></Seg>
                <Seg $w={54}><Thou>000</Thou></Seg>
              </BtnGroup>
              <BtnGroup $w={116}>
                <Seg $w={58}><Dec><ArrowL /><span>.0</span><DecWide>.00</DecWide></Dec></Seg>
                <Seg $w={54}><Dec><DecWide>.00</DecWide><ArrowR /><span>.0</span></Dec></Seg>
              </BtnGroup>
            </Row>
          </Rows>
        </Group>
        <Split />
        <Group $w={240} $pl={29}>
          <Stack $pt={1} $gap={0}>
            <StyleRow><StyleIcon $w={41}><CondFormat /></StyleIcon><StyleText>条件格式</StyleText><Caret $ml={8} /></StyleRow>
            <StyleRow><StyleIcon $w={41}><TableBrush /></StyleIcon><StyleText>套用表格格式</StyleText><Caret $ml={8} /></StyleRow>
            <StyleRow><StyleIcon $w={41}><TableBrush fill /></StyleIcon><StyleText>单元格样式</StyleText><Caret $ml={8} /></StyleRow>
          </Stack>
        </Group>
        <Split />
        <Group $w={158} $pl={25}>
          <Stack $pt={1} $gap={0}>
            <StyleRow><StyleIcon $w={44}><InsertIcon /></StyleIcon><StyleText>插入</StyleText><Caret $ml={14} /></StyleRow>
            <StyleRow><StyleIcon $w={44}><DeleteIcon /></StyleIcon><StyleText>删除</StyleText><Caret $ml={14} /></StyleRow>
            <StyleRow><StyleIcon $w={44}><FormatIcon /></StyleIcon><StyleText>格式</StyleText><Caret $ml={8} /></StyleRow>
          </Stack>
        </Group>
        <Split />
        <Group $w={256} $pl={30}>
          <Stack $pt={8} $gap={13}>
            <IconLine><SumGlyph>Σ</SumGlyph><Caret /></IconLine>
            <IconLine><FillDown /><Caret $ml={11} /></IconLine>
            <IconLine><Eraser /><Caret $ml={8} /></IconLine>
          </Stack>
          <SortCol>
            <SortTop>
              <AZ><AZA>A</AZA>Z</AZ>
              <FunnelWrap><Funnel /></FunnelWrap>
              <Caret $ml={6} $mt={17} />
            </SortTop>
            <SortLabel>排序和<br />筛选</SortLabel>
          </SortCol>
        </Group>
      </Ribbon>

      <Formula>
        <NameBox>
          <NameText>F2137</NameText>
          <Spin><SpinUp /><SpinDown /></Spin>
        </NameBox>
        <FxIcons><Cross /><Check /><Fx>fx</Fx></FxIcons>
        <FormulaText>2020/6/12  10:00:00 PM</FormulaText>
        <FormulaDrop />
      </Formula>

      <ColHead>
        <Corner />
        {COLS.map(([l, w], i) => <ColLabel key={i} $w={w}>{l}</ColLabel>)}
      </ColHead>

      <Sheet>
        <Scrolled>
          {DATA.map(([a, b, e], i) => {
            const row = 2136 + i;
            const sel = row >= 2137 && row <= 2177;
            const vals: string[] = [String(a), String(b), '1', '1', String(e)];
            return (
              <GridRow key={row}>
                <RowNo $sel={sel}>{row}</RowNo>
                {COLS.map(([, w], c) => (
                  <Cell key={c} $w={w} $sel={c === 5 && sel}>
                    {c < 5 ? vals[c] : c === 5 ? <DateText value={dateFor(row)} /> : null}
                  </Cell>
                ))}
              </GridRow>
            );
          })}
        </Scrolled>
        <SelBox><Handle /></SelBox>
        <HScroll />
        <VScroll />
      </Sheet>

      <SheetBar>
        <SheetNav><NavL /><NavR /></SheetNav>
        <SheetTab $w={156} $active>Sheet1</SheetTab>
        <SheetTab $w={159}>Sheet2</SheetTab>
        <SheetTab $w={158}>Sheet3</SheetTab>
        <SheetTab $w={76}><Plus>+</Plus></SheetTab>
      </SheetBar>

      <Status>
        <Ready>就绪</Ready>
        <Stats>
          <span>平均值: 2020-6-16 20:11:42</span>
          <span>计数: 41</span>
          <span>求和: 6839-1-18 12:00:00</span>
        </Stats>
        <StatusRight>
          <ViewBtn $active><ViewGrid /></ViewBtn>
          <ViewBtn><ViewPage /></ViewBtn>
          <ViewBtn><ViewBreak /></ViewBtn>
          <Minus />
          <Track><Knob /></Track>
          <Plus $ml={15}>+</Plus>
          <Zoom>100%</Zoom>
        </StatusRight>
        <Watermark>https://blog.csdn.net/qq_39421444</Watermark>
      </Status>

      <Dialog>
        <DlgTitle>替换</DlgTitle>
        <DlgBody>
          <FieldLabel $mt={43}>查找内容:</FieldLabel>
          <FocusInput><Sel>/*/</Sel></FocusInput>
          <Options>
            <OptLeft>
              <OptLine><OptLabel>范围:</OptLabel><PopUp>工作表<PopEnd><Chevrons /></PopEnd></PopUp></OptLine>
              <OptLine><OptLabel>搜索:</OptLabel><PopUp>按行<PopEnd><Chevrons /></PopEnd></PopUp></OptLine>
            </OptLeft>
            <OptRight>
              <CheckLine><Box />区分大小写</CheckLine>
              <CheckLine><Box />单元格匹配</CheckLine>
              <CheckLine><Box />区分全/半角</CheckLine>
            </OptRight>
          </Options>
          <FieldLabel $mt={92}>替换为:</FieldLabel>
          <PlainInput>/6/</PlainInput>
          <Buttons>
            <Btn $w={160}>替换</Btn>
            <Btn $w={160} $ml={28}>全部替换</Btn>
            <Btn $w={187} $ml={73}>关闭</Btn>
            <Btn $w={188} $ml={27} $primary>查找下一个</Btn>
          </Buttons>
        </DlgBody>
        <Note $l={276} $t={47}>{'Ctrl + H 调起该界面\n输入内容为/*/'}</Note>
        <Note $l={291} $t={335}>{'替换为：/X/\nX 为你想修改后的月份'}</Note>
      </Dialog>
    </Window>
  );
}
